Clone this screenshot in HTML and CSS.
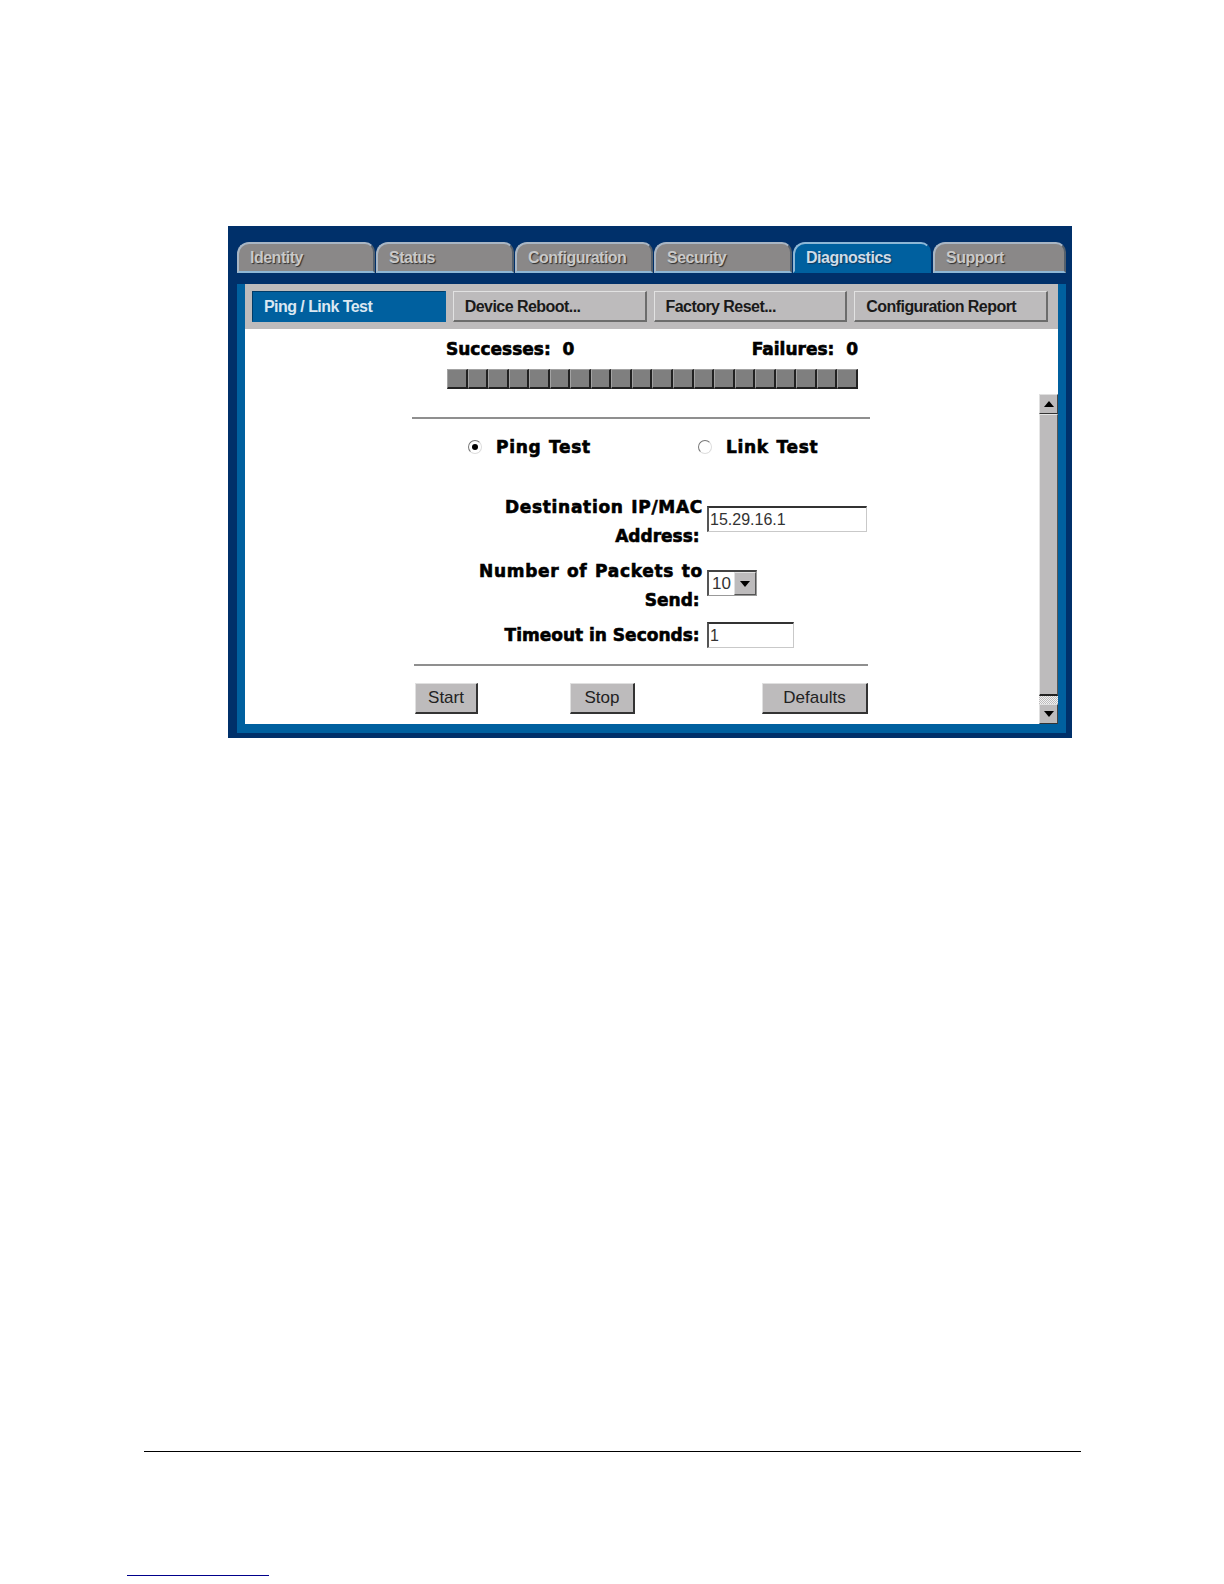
FILE: index.html
```html
<!DOCTYPE html>
<html>
<head>
  <title>Ping / Link Test</title>
  <link rel="stylesheet" href="styles.css">
</head>
<body>
  <div class="window">
    <div class="tabs">
      <div class="tab">Identity</div>
      <div class="tab">Status</div>
      <div class="tab">Configuration</div>
      <div class="tab">Security</div>
      <div class="tab active">Diagnostics</div>
      <div class="tab last">Support</div>
    </div>

    <div class="frame">
      <div class="subtabs">
        <div class="subtab active">Ping / Link Test</div>
        <div class="subtab">Device Reboot...</div>
        <div class="subtab">Factory Reset...</div>
        <div class="subtab">Configuration Report</div>
      </div>

      <div class="content">
        <div class="column">
          <div class="stats">
            <span>Successes:&nbsp; 0</span>
            <span>Failures:&nbsp; 0</span>
          </div>
          <div class="progress">
            <i></i><i></i><i></i><i></i><i></i><i></i><i></i><i></i><i></i><i></i>
            <i></i><i></i><i></i><i></i><i></i><i></i><i></i><i></i><i></i><i></i>
          </div>
          <div class="rule top-rule"></div>

          <div class="modes">
            <div class="mode ping"><span class="radio checked"></span>Ping Test</div>
            <div class="mode"><span class="radio"></span>Link Test</div>
          </div>

          <div class="form-row">
            <label>Destination IP/MAC<br><span class="tail">Address:&thinsp;</span></label>
            <input class="field wide" type="text" value="15.29.16.1">
          </div>
          <div class="form-row">
            <label>Number of Packets to<br><span class="tail">Send:&thinsp;</span></label>
            <div class="select">
              <span class="select-value">10</span>
              <span class="select-arrow"><svg width="10" height="6" viewBox="0 0 10 6"><path d="M0 0h10L5 6z" fill="#000"/></svg></span>
            </div>
          </div>
          <div class="form-row">
            <label class="timeout">Timeout in Seconds:&thinsp;</label>
            <input class="field narrow" type="text" value="1">
          </div>

          <div class="rule bottom-rule"></div>
          <div class="buttons">
            <button class="btn start">Start</button>
            <button class="btn stop">Stop</button>
            <button class="btn defaults">Defaults</button>
          </div>
        </div>

        <div class="scrollbar">
          <div class="scroll-btn"><svg width="10" height="6" viewBox="0 0 10 6"><path d="M5 0l5 6H0z" fill="#000"/></svg></div>
          <div class="scroll-thumb"></div>
          <div class="scroll-track"></div>
          <div class="scroll-btn"><svg width="10" height="6" viewBox="0 0 10 6"><path d="M0 0h10L5 6z" fill="#000"/></svg></div>
        </div>
      </div>
    </div>
  </div>

  <div class="page-rule"></div>
  <div class="page-link"></div>
</body>
</html>
```

FILE: styles.css
```css
html, body {
  margin: 0;
  padding: 0;
  background: #fff;
}
body {
  height: 1584px;
  overflow: hidden;
  font-family: "Liberation Sans", Arial, sans-serif;
}
.window {
  box-sizing: border-box;
  width: 844px;
  height: 512px;
  margin: 226px 0 0 228px;
  padding: 16px 6px 0 9px;
  background: #00306a;
}
.tabs {
  display: flex;
  height: 31px;
}
.tab {
  box-sizing: border-box;
  width: 138px;
  margin-right: 1px;
  padding: 5px 0 0 11px;
  border: 2px solid #a9b6c4;
  border-right-color: #55606c;
  border-bottom-color: #8db7d6;
  border-radius: 12px 10px 0 0;
  background: #8a8888;
  color: #c9c9c9;
  font-size: 16px;
  font-weight: bold;
  letter-spacing: -0.5px;
  text-shadow: 1px 1px 1px #2f2f2f;
}
.tab.active {
  background: #00609f;
  border-color: #8db7d6 #00609f #00609f #8db7d6;
  color: #cfdce8;
  text-shadow: 1px 1px 1px #123a5c;
}
.tab.last {
  width: 133px;
  margin-left: 1px;
  margin-right: 0;
}
.frame {
  box-sizing: border-box;
  height: 449px;
  margin-top: 11px;
  padding: 0 8px;
  background: #00609f;
}
.subtabs {
  box-sizing: border-box;
  display: flex;
  gap: 7px;
  height: 45px;
  padding: 7px 10px 7px 7px;
  background: #bdbbbc;
}
.subtab {
  box-sizing: border-box;
  width: 194px;
  height: 31px;
  padding: 6px 0 0 11px;
  border: 1px solid #e2e2e2;
  border-right: 2px solid #6c6c6c;
  border-bottom: 2px solid #6c6c6c;
  color: #1a1a1a;
  font-size: 16px;
  font-weight: bold;
  letter-spacing: -0.55px;
}
.subtab.active {
  background: #00609f;
  border-color: #003c68;
  border-right-color: #00609f;
  border-bottom-color: #00609f;
  color: #dbe8f2;
}
.content {
  display: flex;
  height: 395px;
  background: #fff;
}
.column {
  width: 458px;
  margin-left: 167px;
}
.stats, .modes, .form-row label {
  font-family: "DejaVu Sans", Verdana, sans-serif;
  font-weight: bold;
  color: #000;
  -webkit-text-stroke: 0.6px #000;
}
.stats {
  display: flex;
  justify-content: space-between;
  margin: 8px 12px 0 34px;
  font-size: 17px;
  line-height: 24px;
}
.progress {
  display: flex;
  height: 20px;
  margin: 8px 12px 0 35px;
}
.progress i {
  flex: 1;
  box-sizing: border-box;
  border: 1px solid #a3a3a3;
  border-right: 2px solid #222;
  border-bottom: 2px solid #222;
  background: #7f7f7f;
}
.rule {
  height: 2px;
  background: #8f8f8f;
}
.top-rule {
  margin-top: 28px;
}
.modes {
  display: flex;
  height: 30px;
  margin-top: 13px;
  font-size: 17px;
  line-height: 30px;
  letter-spacing: 0.7px;
  word-spacing: 1px;
}
.mode {
  display: flex;
  align-items: center;
}
.mode.ping {
  width: 230px;
  margin-left: 56px;
}
.radio {
  box-sizing: border-box;
  display: block;
  position: relative;
  width: 14px;
  height: 14px;
  margin-right: 14px;
  border: 1px solid #777;
  border-right-color: #ddd;
  border-bottom-color: #ddd;
  border-radius: 50%;
  background: #fff;
}
.radio.checked::after {
  content: "";
  position: absolute;
  top: 3px;
  left: 3px;
  width: 6px;
  height: 6px;
  border-radius: 50%;
  background: #000;
}
.form-row {
  display: flex;
  align-items: center;
  margin-bottom: 6px;
}
.form-row label {
  width: 291px;
  margin-right: 4px;
  font-size: 17px;
  line-height: 29px;
  letter-spacing: 0.7px;
  word-spacing: 1px;
  text-align: right;
  white-space: nowrap;
}
.form-row label.timeout, .form-row .tail {
  letter-spacing: 0;
  word-spacing: 0;
}
.modes + .form-row {
  margin-top: 31px;
}
.field {
  box-sizing: border-box;
  height: 26px;
  margin: -3px 0 3px;
  padding: 1px 0 0 1px;
  border: 1px solid #c9c9c9;
  border-top: 2px solid #333;
  border-left: 2px solid #555;
  outline: none;
  background: #fff;
  color: #333;
  font-family: "Liberation Sans", Arial, sans-serif;
  font-size: 16px;
}
.field.wide {
  width: 160px;
}
.field.narrow {
  width: 87px;
  margin: -1px 0 1px;
}
.select {
  box-sizing: border-box;
  display: flex;
  width: 50px;
  height: 26px;
  margin: -3px 0 3px;
  border: 1px solid #999;
  border-top: 2px solid #444;
  border-left: 2px solid #555;
  background: #fff;
}
.select-value {
  flex: 1;
  padding-left: 3px;
  color: #333;
  font-size: 17px;
  line-height: 23px;
}
.select-arrow {
  display: flex;
  align-items: center;
  justify-content: center;
  width: 20px;
  border: 1px solid #e0e0e0;
  border-right-color: #555;
  border-bottom-color: #555;
  background: #bdbbbc;
}
.bottom-rule {
  width: 454px;
  margin: 14px 0 0 2px;
}
.buttons {
  display: flex;
  margin: 17px 0 0 3px;
}
.btn {
  box-sizing: border-box;
  height: 31px;
  padding: 0;
  border: 1px solid #e0e0e0;
  border-right: 2px solid #333;
  border-bottom: 2px solid #333;
  background: #bdbbbc;
  color: #222;
  font-family: "Liberation Sans", Arial, sans-serif;
  font-size: 17px;
}
.btn.start {
  width: 63px;
}
.btn.stop {
  width: 65px;
  margin-left: 92px;
}
.btn.defaults {
  width: 106px;
  margin-left: 127px;
}
.scrollbar {
  display: flex;
  flex-direction: column;
  width: 19px;
  margin: 65px 0 0 auto;
}
.scroll-btn {
  box-sizing: border-box;
  display: flex;
  align-items: center;
  justify-content: center;
  height: 20px;
  border: 1px solid #e0e0e0;
  border-right-color: #444;
  border-bottom-color: #333;
  background: #bdbbbc;
}
.scroll-thumb {
  flex: 1;
  box-sizing: border-box;
  border: 1px solid #e6e6e6;
  border-right-color: #555;
  border-bottom: 2px solid #222;
  background: #bdbbbc;
}
.scroll-track {
  height: 8px;
  background: repeating-conic-gradient(#bdbbbc 0 25%, #f2f2f2 0 50%) 0 0 / 2px 2px;
}
.page-rule {
  width: 937px;
  height: 1px;
  margin: 713px 0 0 144px;
  background: #000;
}
.page-link {
  width: 142px;
  height: 1px;
  margin: 123px 0 0 127px;
  background: #00008b;
}
```
